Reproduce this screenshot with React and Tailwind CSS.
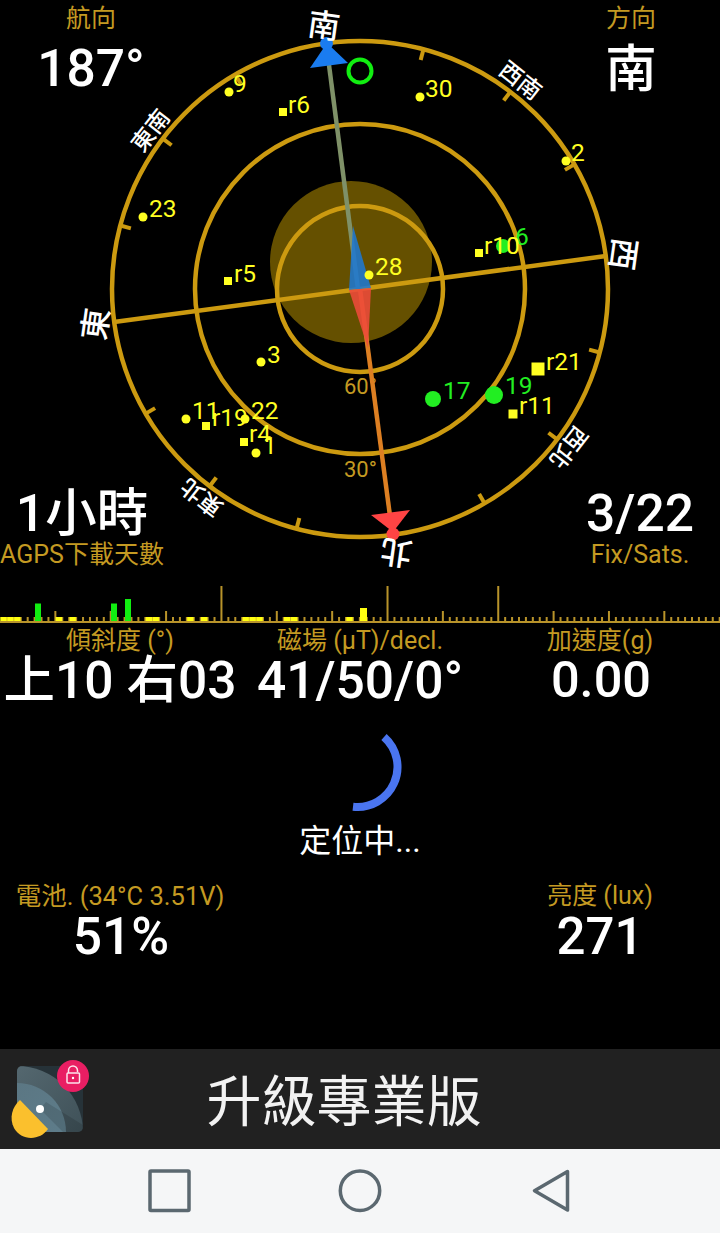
import React from "react";

const FONT = '"Roboto","Noto Sans CJK TC",sans-serif';
const cx = 360, cy = 289;
const rot = -7.67;

const gold = "#cc9a10";
const yellow = "#ffff22";
const green = "#22ee22";

const dirs = [
  { t: "南", x: 324, y: 26, a: 8, s: 32 },
  { t: "西", x: 623, y: 254, a: 98, s: 32 },
  { t: "北", x: 396, y: 552, a: 188, s: 32 },
  { t: "東", x: 96, y: 324, a: -82, s: 32 },
  { t: "東南", x: 151, y: 131, a: -52, s: 23 },
  { t: "西南", x: 520, y: 81, a: 38, s: 23 },
  { t: "西北", x: 568, y: 447, a: 128, s: 23 },
  { t: "東北", x: 202, y: 497, a: -142, s: 23 },
];

const tickAngles = [22.5, 45, 67.5, 112.5, 135, 157.5, 202.5, 225, 247.5, 292.5, 315, 337.5];

function ringPoint(angle, r) {
  const a = ((angle + rot) * Math.PI) / 180;
  return [cx + r * Math.sin(a), cy - r * Math.cos(a)];
}

const dots = [
  [229, 92, "9", 233, 92],
  [143, 217, "23", 149, 217],
  [420, 97, "30", 425, 97],
  [566, 161, "2", 571, 161],
  [369, 275, "28", 375, 275],
  [261, 362, "3", 267, 363],
  [186, 419, "11", 192, 419],
  [245, 419, "22", 251, 419],
  [256, 453, "1", 263, 454],
];
const squares = [
  [283, 112, 8, "r6", 288, 113],
  [228, 281, 8, "r5", 234, 282],
  [479, 253, 8, "r10", 484, 254],
  [206, 426, 8, "r19", 212, 426],
  [244, 442, 8, "r4", 249, 442],
  [538, 369, 13, "r21", 546, 370],
  [513, 414, 9, "r11", 519, 414],
];

const labelCls = "leading-[30px] text-[#c49a22] whitespace-nowrap";
const valueCls = "font-medium text-white whitespace-nowrap";

function Compass() {
  return (
    <svg className="absolute left-0 top-0" width="720" height="586" viewBox="0 0 720 586" style={{ fontFamily: FONT }}>
      <circle cx="351" cy="262" r="81" fill="#655000" />
      <g fill="none" stroke={gold} strokeWidth="4.5">
        <circle cx={cx} cy={cy} r="248" />
        <circle cx={cx} cy={cy} r="165" />
        <circle cx={cx} cy={cy} r="83" />
        <line x1="114" y1="322" x2="606" y2="256" />
        {tickAngles.map((t) => {
          const [x1, y1] = ringPoint(t, 248);
          const [x2, y2] = ringPoint(t, 237);
          return <line key={t} x1={x1} y1={y1} x2={x2} y2={y2} strokeWidth="4" />;
        })}
      </g>
      <text x="344" y="394" fontSize="22" fill="#c49a22">60°</text>
      <text x="344" y="477" fontSize="22" fill="#c49a22">30°</text>

      <line x1="329" y1="65" x2="358" y2="289" stroke="#7f9168" strokeWidth="4.5" />
      <line x1="360" y1="289" x2="390" y2="516" stroke="#dd7f22" strokeWidth="4.5" />
      <polygon points="349,290 371,288 353,226" fill="#1f78d0" opacity="0.88" />
      <polygon points="349,290 371,288 368,348" fill="#ee4a3a" opacity="0.88" />
      <polygon points="310,68 348,63 327,43" fill="#1a7cf0" />
      <circle cx="326.5" cy="43.5" r="6.5" fill="#1a7cf0" />
      <polygon points="371,515 410,510 393,532" fill="#ff4444" />
      <circle cx="393" cy="534" r="6.5" fill="#ff4444" />

      <circle cx="360" cy="71" r="11.5" fill="none" stroke="#11ee11" strokeWidth="4" />

      {dirs.map((d) => (
        <text
          key={d.t}
          x={d.x}
          y={d.y}
          fontSize={d.s}
          fill="#fff"
          fontWeight={500}
          textAnchor="middle"
          dominantBaseline="central"
          transform={`rotate(${d.a} ${d.x} ${d.y})`}
        >
          {d.t}
        </text>
      ))}

      <circle cx="503" cy="246" r="7" fill={green} />
      <text x="515" y="245" fontSize="24.5" fill={green}>6</text>
      <circle cx="433" cy="399" r="8" fill={green} />
      <text x="443" y="399" fontSize="24.5" fill={green}>17</text>
      <circle cx="494" cy="395" r="9" fill={green} />
      <text x="505" y="394" fontSize="24.5" fill={green}>19</text>

      {squares.map((s) => (
        <g key={s[3]}>
          <rect x={s[0] - s[2] / 2} y={s[1] - s[2] / 2} width={s[2]} height={s[2]} fill={yellow} />
          <text x={s[4]} y={s[5]} fontSize="24.5" fill={yellow}>{s[3]}</text>
        </g>
      ))}
      {dots.map((s) => (
        <g key={s[2]}>
          <circle cx={s[0]} cy={s[1]} r="4.5" fill={yellow} />
          <text x={s[3]} y={s[4]} fontSize="24.5" fill={yellow}>{s[2]}</text>
        </g>
      ))}
    </svg>
  );
}

const U = 6.92;
const yellowSlots = [0, 1, 2, 8, 10, 21, 22, 27, 29, 35, 36, 37, 41, 42, 50];
const tall = [32, 56, 72];
const mid = [8, 16, 24, 40, 48, 64, 80, 88, 96];

function Chart() {
  const marks = [];
  for (let k = 1; k <= 104; k++) {
    const h = tall.includes(k) ? 35 : mid.includes(k) ? 10 : 4;
    marks.push(<rect key={k} x={k * U - 1} y={35 - h} width="2" height={h} fill="#b8932a" />);
  }
  return (
    <svg className="block" width="720" height="38" viewBox="0 0 720 38">
      {marks}
      {yellowSlots.map((k) => (
        <rect key={k} x={k * U + 0.3} y="31" width="6.4" height="4" fill="#ffff11" />
      ))}
      <rect x="360" y="22" width="7" height="13" fill="#ffff11" />
      <rect x="35" y="17.5" width="6" height="17.5" fill="#11ee11" />
      <rect x="111" y="17.5" width="6" height="17.5" fill="#11ee11" />
      <rect x="125" y="13" width="6" height="22" fill="#11ee11" />
      <rect x="0" y="35" width="720" height="2" fill="#b8932a" />
    </svg>
  );
}

function Stat({ label, value, labelClass = "text-[25px]", valueClass = "text-[51.5px]" }) {
  return (
    <div className="w-[240px] flex flex-col items-center">
      <div className={`${labelCls} ${labelClass}`}>{label}</div>
      <div className={`${valueCls} leading-[50px] ${valueClass}`}>{value}</div>
    </div>
  );
}

export default function App() {
  return (
    <div className="w-[720px] h-[1233px] bg-black flex flex-col overflow-hidden" style={{ fontFamily: FONT }}>
      <div className="relative h-[586px] shrink-0 flex flex-col justify-between">
        <Compass />
        <div className="relative flex justify-between pt-[4px]">
          <div className="w-[182px] flex flex-col items-center">
            <div className={`${labelCls} text-[25px]`}>航向</div>
            <div className={`${valueCls} text-[51.5px] leading-[66px] mt-[2px]`}>187°</div>
          </div>
          <div className="w-[178px] flex flex-col items-center">
            <div className={`${labelCls} text-[25px]`}>方向</div>
            <div className={`${valueCls} text-[51.5px] leading-[66px] mt-[3px]`}>南</div>
          </div>
        </div>
        <div className="relative flex justify-between pb-[15px]">
          <div className="w-[164px] flex flex-col items-center">
            <div className={`${valueCls} text-[51.5px] leading-[54px]`}>1小時</div>
            <div className={`${labelCls} text-[25px] -translate-y-[1px]`}>AGPS下載天數</div>
          </div>
          <div className="w-[160px] flex flex-col items-center">
            <div className={`${valueCls} text-[51.5px] leading-[54px]`}>3/22</div>
            <div className={`${labelCls} text-[25px] -translate-y-[1px]`}>Fix/Sats.</div>
          </div>
        </div>
      </div>

      <Chart />

      <div className="flex h-[84px] shrink-0 pt-[2px]">
        <Stat label="傾斜度 (°)" value="上10 右03" />
        <Stat label="磁場 (µT)/decl." value="41/50/0°" />
        <Stat label="加速度(g)" value="0.00" valueClass="text-[50.5px] translate-x-[1px] -translate-y-[1px]" />
      </div>

      <div className="flex flex-col items-center h-[172px] shrink-0 pt-[17px]">
        <svg width="100" height="90" viewBox="0 0 100 90" className="block shrink-0">
          <path d="M 74 12 A 40 40 0 0 1 43 81.7" fill="none" stroke="#4a75f0" strokeWidth="8" />
        </svg>
        <div className="text-[32px] leading-[36px] text-white mt-[8px]">定位中...</div>
      </div>

      <div className="flex justify-between h-[169px] shrink-0 pt-[1px]">
        <Stat label="電池. (34°C 3.51V)" value="51%" labelClass="text-[25.5px]" valueClass="text-[51.5px] mt-[1px] translate-x-[1px]" />
        <Stat label="亮度 (lux)" value="271" valueClass="text-[51px] mt-[1px]" />
      </div>

      <div className="h-[100px] bg-[#212121] flex items-center shrink-0">
        <div className="relative w-[100px] h-[100px] shrink-0">
          <svg width="100" height="100" viewBox="0 0 100 100" className="absolute left-0 top-0">
            <defs>
              <clipPath id="c"><rect x="17" y="17" width="66" height="66" rx="5" /></clipPath>
              <linearGradient id="band" x1="0" y1="0" x2="1" y2="1">
                <stop offset="0" stopColor="#5f737b" />
                <stop offset="1" stopColor="#34454c" />
              </linearGradient>
              <linearGradient id="disc" x1="0" y1="0" x2="1" y2="1">
                <stop offset="0" stopColor="#5a7480" />
                <stop offset="1" stopColor="#5f7f8d" />
              </linearGradient>
            </defs>
            <g clipPath="url(#c)">
              <rect x="17" y="17" width="66" height="66" fill="#263238" />
              <circle cx="17" cy="83" r="66" fill="url(#band)" />
              <circle cx="17" cy="83" r="49" fill="url(#disc)" />
              <polygon points="40,60 63,83 83,83 83,76 46,53" fill="#000" opacity="0.13" />
            </g>
            <path d="M 20 51 L 48 80 C 40 92 21 92 14 79 C 9 69 12 58 20 51 Z" fill="#fbc02d" />
            <circle cx="40" cy="60" r="4" fill="#fff" />
            <circle cx="73" cy="27" r="16" fill="#e91e63" />
            <rect x="67" y="24" width="12.5" height="10" rx="1" fill="none" stroke="#fce4ec" strokeWidth="1.5" />
            <path d="M 68.5 24 V 21.5 A 4.5 4.5 0 0 1 77.5 21.5 V 23" fill="none" stroke="#fce4ec" strokeWidth="1.5" />
            <circle cx="73" cy="29" r="1.2" fill="#fff" />
          </svg>
        </div>
        <div className="w-[488px] text-center text-[55px] leading-[60px] text-[#f2f2f2] pt-[6px]">升級專業版</div>
      </div>

      <div className="h-[84px] bg-[#f5f6f7] shrink-0">
        <svg width="720" height="84" viewBox="0 0 720 84" className="block">
          <rect x="150" y="22" width="39" height="39.5" rx="1" fill="none" stroke="#5b6870" strokeWidth="3.5" />
          <circle cx="360" cy="41.7" r="19.7" fill="none" stroke="#5b6870" strokeWidth="3.5" />
          <path d="M 567.5 22.5 L 534.5 41.7 L 567.5 61 Z" fill="none" stroke="#5b6870" strokeWidth="3.5" strokeLinejoin="round" />
        </svg>
      </div>
    </div>
  );
}
